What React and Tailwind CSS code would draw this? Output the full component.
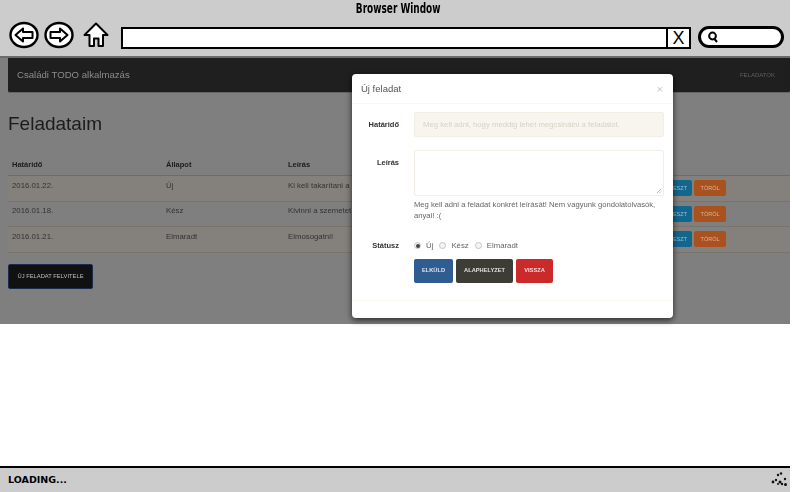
const rows = [
  { date: '2016.01.22.', status: 'Új', desc: 'Ki kell takarítani a konyhát!', striped: true },
  { date: '2016.01.18.', status: 'Kész', desc: 'Kivinni a szemetet!', striped: false },
  { date: '2016.01.21.', status: 'Elmaradt', desc: 'Elmosogatni!', striped: true },
];

function BackIcon({ flip }) {
  return (
    <svg width="30" height="28" viewBox="0 0 30 28" className={flip ? '-scale-x-100' : ''}>
      <ellipse cx="15" cy="14" rx="13.5" ry="12" fill="#fff" stroke="#000" strokeWidth="2.4" />
      <path d="M6.5 14 L14 7.5 V11 H23.5 V17 H14 V20.5 Z" fill="none" stroke="#000" strokeWidth="2" strokeLinejoin="round" />
    </svg>
  );
}

function HomeIcon() {
  return (
    <svg width="26" height="26" viewBox="0 0 26 26">
      <path d="M1.5 13 L13 1.5 L24.5 13 H20 V24 H15.5 V16.5 H11 V24 H6.5 V13 Z" fill="#fff" stroke="#000" strokeWidth="2" strokeLinejoin="round" />
    </svg>
  );
}

function SearchIcon() {
  return (
    <svg width="12" height="12" viewBox="0 0 12 12">
      <circle cx="5.5" cy="5" r="3.4" fill="none" stroke="#000" strokeWidth="2" />
      <path d="M7.5 8 L10 11" stroke="#000" strokeWidth="2" />
    </svg>
  );
}

function Spinner() {
  return (
    <svg width="16" height="16" viewBox="0 0 16 16">
      {[[2, 10, 1.4], [5, 8, 1.2], [7, 3, 1.2], [10, 1.5, 1.2], [9, 10, 1.5], [11, 12, 1.2], [14, 7, 1.2], [14.5, 12.5, 1.5], [7, 12, 1]].map(([x, y, r]) => (
        <circle key={`${x}-${y}`} cx={x} cy={y} r={r} fill="#111" />
      ))}
    </svg>
  );
}

function Radio({ checked, label }) {
  return (
    <label className="flex items-center gap-[5px]">
      <span className="w-[7px] h-[7px] rounded-full border border-[#c4c4c4] bg-[#f4f4f4] flex items-center justify-center">
        {checked && <span className="w-[4px] h-[4px] rounded-full bg-[#444]" />}
      </span>
      <span>{label}</span>
    </label>
  );
}

export default function App() {
  return (
    <div className="w-[792px] h-[492px] flex flex-col bg-white overflow-hidden font-['Liberation_Sans',sans-serif]">
      {/* fake browser chrome */}
      <div className="h-[58px] w-[790px] bg-[#cccccc] border-b-2 border-[#6b6b6b] flex flex-col shrink-0">
        <div className="h-[17px] pl-[9px] flex items-center justify-center text-[14px] font-bold text-black font-['DejaVu_Sans_Condensed','DejaVu_Sans',sans-serif] scale-x-[.71]">
          Browser Window
        </div>
        <div className="flex items-center pl-[9px] pt-[4px]">
          <BackIcon />
          <div className="w-[5px]" />
          <BackIcon flip />
          <div className="w-[9px]" />
          <HomeIcon />
          <div className="w-[12px]" />
          <div className="w-[570px] h-[22px] mt-[5px] border-2 border-black bg-white flex justify-end">
            <div className="w-[23px] border-l-2 border-black flex items-center justify-center text-[18px] leading-none text-black">
              X
            </div>
          </div>
          <div className="w-[7px]" />
          <div className="w-[86px] h-[22px] mt-[3px] border-[3px] border-black rounded-full bg-white flex items-center pl-[6px]">
            <SearchIcon />
          </div>
        </div>
      </div>

      {/* dimmed page + modal */}
      <div className="relative h-[266px] w-[790px] bg-[#7f7f7f] shrink-0">
        <div className="h-full blur-[0.5px]">
          <div className="ml-[8px] h-[35px] bg-[#1f1f1f] rounded-b-[2px] flex items-center justify-between pl-[9px] pr-[15px] mb-[17px] border-b border-[#666]">
            <span className="text-[9.6px] text-[#8c8c8c]">Családi TODO alkalmazás</span>
            <span className="text-[6px] text-[#5f5f5f]">FELADATOK</span>
          </div>
          <h1 className="pl-[8px] text-[19px] leading-[28px] text-[#1c1c1c] mb-[13px]">Feladataim</h1>
          <div className="ml-[8px]">
            <div className="flex items-center h-[25px] pl-[4px] pt-[3px] text-[7.5px] font-bold text-[#1c1c1c] border-b border-[#6f6c66]">
              <span className="w-[154px]">Határidő</span>
              <span className="w-[122px]">Állapot</span>
              <span>Leírás</span>
            </div>
            {rows.map((row) => (
              <div
                key={row.date}
                className={`flex items-center h-[25.5px] pl-[4px] text-[7.8px] text-[#333] border-b border-[#77746e] ${row.striped ? 'bg-[#84817c]' : ''}`}
              >
                <span className="w-[154px] pb-[5px]">{row.date}</span>
                <span className="w-[122px] pb-[5px]">{row.status}</span>
                <span className="w-[280px] pb-[5px] whitespace-nowrap">{row.desc}</span>
                <div className="flex gap-[2px] ml-[74px]">
                  <button className="w-[50px] h-[16px] rounded-[2px] bg-[#12678f] text-[5.5px] text-[#9fbccb] text-right pr-[5px]">SZERKESZT</button>
                  <button className="w-[32px] h-[16px] rounded-[2px] bg-[#a9521f] text-[5.5px] text-[#d8b39c]">TÖRÖL</button>
                </div>
              </div>
            ))}
            <button className="mt-[11px] w-[85px] h-[25px] rounded-[2px] bg-[#111] border border-[#1c2a4c] text-[5.8px] text-[#bdbdbd]">
              ÚJ FELADAT FELVITELE
            </button>
          </div>
        </div>

        <div className="absolute left-[352px] top-[16px] w-[321px] h-[244px] bg-white rounded-[4px] shadow-[0_2px_6px_rgba(0,0,0,0.7)] flex flex-col blur-[0.3px]">
          <div className="h-[30px] pt-[1px] flex items-center justify-between pl-[9px] pr-[10px] border-b border-[#f8f7f0] text-[#555] shrink-0">
            <span className="text-[9.5px]">Új feladat</span>
            <span className="text-[11px] text-[#c8c8c8]">×</span>
          </div>
          <div className="flex-1 pt-[8px] text-[7.8px]">
            <div className="flex items-center">
              <span className="w-[47px] text-right font-bold text-[#333] text-[7.5px]">Határidő</span>
              <div className="ml-[15px] w-[250px] h-[25px] bg-[#f8f5ee] border border-[#f2eee4] rounded-[2px] flex items-center pl-[8px] text-[7.75px] text-[#d6d2c8]">
                Meg kell adni, hogy meddig lehet megcsinálni a feladatot.
              </div>
            </div>
            <div className="flex mt-[13px]">
              <span className="w-[47px] text-right font-bold text-[#333] text-[7.5px] pt-[7px]">Leírás</span>
              <div className="ml-[15px] w-[250px]">
                <div className="h-[46px] border border-[#f2eee4] rounded-[2px] relative">
                  <svg width="6" height="6" viewBox="0 0 6 6" className="absolute right-[1px] bottom-[1px]">
                    <path d="M1 5 L5 1 M3.5 5 L5 3.5" stroke="#999" strokeWidth="0.7" />
                  </svg>
                </div>
                <p className="mt-[3px] text-[#666] text-[7.65px] leading-[11px]">
                  Meg kell adni a feladat konkrét leírását! Nem vagyunk gondolatolvasók, anyal! :(
                </p>
              </div>
            </div>
            <div className="flex items-center mt-[19px]">
              <span className="w-[47px] text-right font-bold text-[#333] text-[7.5px]">Státusz</span>
              <div className="ml-[15px] flex gap-[6px] text-[#666]">
                <Radio checked label="Új" />
                <Radio label="Kész" />
                <Radio label="Elmaradt" />
              </div>
            </div>
            <div className="flex gap-[3px] mt-[7px] ml-[62px] text-[5.7px] font-bold">
              <button className="w-[39px] h-[24px] rounded-[2px] bg-[#2f5c91] text-[#dfe7f0]">ELKÜLD</button>
              <button className="w-[57px] h-[24px] rounded-[2px] bg-[#3d3d36] text-[#e4e4e0]">ALAPHELYZET</button>
              <button className="w-[37px] h-[24px] rounded-[2px] bg-[#cb2a2a] text-[#f6dcdc]">VISSZA</button>
            </div>
          </div>
          <div className="h-[18px] border-t border-[#f8f7f0] shrink-0" />
        </div>
      </div>

      <div className="flex-1" />

      {/* status bar */}
      <div className="h-[26px] w-[790px] bg-[#cccccc] border-t-2 border-black flex items-center justify-between pl-[8px] pr-[3px] shrink-0">
        <span className="text-[9.5px] font-bold text-black font-['DejaVu_Sans',sans-serif]">LOADING...</span>
        <Spinner />
      </div>
    </div>
  );
}
